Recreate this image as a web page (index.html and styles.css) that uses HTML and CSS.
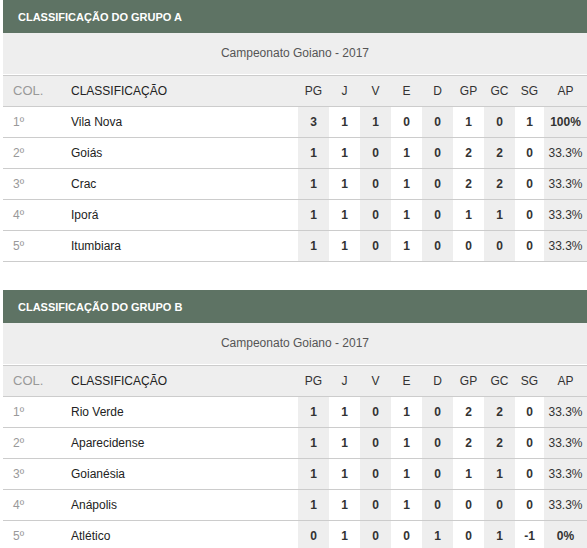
FILE: index.html
```html
<!DOCTYPE html>
<html>
<head>
  <meta charset="UTF-8">
  <title>Classificação - Campeonato Goiano 2017</title>
  <link rel="stylesheet" href="styles.css">
</head>
<body>
  <div class="group">
    <h2 class="group-title">CLASSIFICAÇÃO DO GRUPO A</h2>
    <div class="subtitle">Campeonato Goiano - 2017</div>
    <table class="standings">
      <colgroup>
        <col class="c-pos"><col class="c-name">
        <col class="c-num"><col class="c-num"><col class="c-num"><col class="c-num">
        <col class="c-num"><col class="c-num"><col class="c-num">
        <col class="c-sg"><col class="c-ap">
      </colgroup>
      <thead>
        <tr>
          <th class="pos">COL.</th><th class="name">CLASSIFICAÇÃO</th>
          <th>PG</th><th>J</th><th>V</th><th>E</th><th>D</th><th>GP</th><th>GC</th><th>SG</th><th>AP</th>
        </tr>
      </thead>
      <tbody>
        <tr><td class="pos">1º</td><td class="name">Vila Nova</td><td class="alt">3</td><td>1</td><td class="alt">1</td><td>0</td><td class="alt">0</td><td>1</td><td class="alt">0</td><td>1</td><td class="alt ap strong">100%</td></tr>
        <tr><td class="pos">2º</td><td class="name">Goiás</td><td class="alt">1</td><td>1</td><td class="alt">0</td><td>1</td><td class="alt">0</td><td>2</td><td class="alt">2</td><td>0</td><td class="alt ap">33.3%</td></tr>
        <tr><td class="pos">3º</td><td class="name">Crac</td><td class="alt">1</td><td>1</td><td class="alt">0</td><td>1</td><td class="alt">0</td><td>2</td><td class="alt">2</td><td>0</td><td class="alt ap">33.3%</td></tr>
        <tr><td class="pos">4º</td><td class="name">Iporá</td><td class="alt">1</td><td>1</td><td class="alt">0</td><td>1</td><td class="alt">0</td><td>1</td><td class="alt">1</td><td>0</td><td class="alt ap">33.3%</td></tr>
        <tr><td class="pos">5º</td><td class="name">Itumbiara</td><td class="alt">1</td><td>1</td><td class="alt">0</td><td>1</td><td class="alt">0</td><td>0</td><td class="alt">0</td><td>0</td><td class="alt ap">33.3%</td></tr>
      </tbody>
    </table>
  </div>

  <div class="group">
    <h2 class="group-title">CLASSIFICAÇÃO DO GRUPO B</h2>
    <div class="subtitle">Campeonato Goiano - 2017</div>
    <table class="standings">
      <colgroup>
        <col class="c-pos"><col class="c-name">
        <col class="c-num"><col class="c-num"><col class="c-num"><col class="c-num">
        <col class="c-num"><col class="c-num"><col class="c-num">
        <col class="c-sg"><col class="c-ap">
      </colgroup>
      <thead>
        <tr>
          <th class="pos">COL.</th><th class="name">CLASSIFICAÇÃO</th>
          <th>PG</th><th>J</th><th>V</th><th>E</th><th>D</th><th>GP</th><th>GC</th><th>SG</th><th>AP</th>
        </tr>
      </thead>
      <tbody>
        <tr><td class="pos">1º</td><td class="name">Rio Verde</td><td class="alt">1</td><td>1</td><td class="alt">0</td><td>1</td><td class="alt">0</td><td>2</td><td class="alt">2</td><td>0</td><td class="alt ap">33.3%</td></tr>
        <tr><td class="pos">2º</td><td class="name">Aparecidense</td><td class="alt">1</td><td>1</td><td class="alt">0</td><td>1</td><td class="alt">0</td><td>2</td><td class="alt">2</td><td>0</td><td class="alt ap">33.3%</td></tr>
        <tr><td class="pos">3º</td><td class="name">Goianésia</td><td class="alt">1</td><td>1</td><td class="alt">0</td><td>1</td><td class="alt">0</td><td>1</td><td class="alt">1</td><td>0</td><td class="alt ap">33.3%</td></tr>
        <tr><td class="pos">4º</td><td class="name">Anápolis</td><td class="alt">1</td><td>1</td><td class="alt">0</td><td>1</td><td class="alt">0</td><td>0</td><td class="alt">0</td><td>0</td><td class="alt ap">33.3%</td></tr>
        <tr><td class="pos">5º</td><td class="name">Atlético</td><td class="alt">0</td><td>1</td><td class="alt">0</td><td>0</td><td class="alt">1</td><td>0</td><td class="alt">1</td><td>-1</td><td class="alt ap strong">0%</td></tr>
      </tbody>
    </table>
  </div>
</body>
</html>
```

FILE: styles.css
```css
body {
  font-family: "Liberation Sans", Arial, sans-serif;
  margin: 0 0 0 3px;
  padding: 0;
  color: #333;
}
.group {
  width: 584px;
  margin-bottom: 28px;
}
.group-title {
  margin: 0;
  height: 33px;
  line-height: 34px;
  padding-left: 15px;
  background-color: #5e7364;
  color: #fff;
  font-size: 11px;
  font-weight: bold;
}
.subtitle {
  height: 41px;
  line-height: 40px;
  background-color: #eee;
  border-bottom: 1px solid #fff;
  text-align: center;
  font-size: 12px;
  color: #555;
}
.standings {
  width: 584px;
  table-layout: fixed;
  border-collapse: separate;
  border-spacing: 0;
  font-size: 12px;
}
.c-pos { width: 68px; }
.c-name { width: 227px; }
.c-num { width: 31px; }
.c-sg { width: 29px; }
.c-ap { width: 43px; }
.standings th {
  background-color: #eee;
  border-top: 1px solid #ccc;
  border-bottom: 1px solid #ccc;
  padding: 0;
  height: 30px;
  line-height: 30px;
  font-weight: normal;
  color: #333;
  text-align: center;
}
.standings td {
  padding: 0;
  height: 30px;
  line-height: 30px;
  border-bottom: 1px solid #ccc;
  text-align: center;
  font-weight: bold;
  color: #333;
}
.standings .pos {
  text-align: left;
  padding-left: 10px;
  color: #999;
  font-weight: normal;
}
.standings th.pos {
  font-size: 13px;
}
.standings .name {
  text-align: left;
  font-weight: normal;
  color: #222;
}
.standings td.alt {
  background-color: #eee;
}
.standings td.ap {
  font-weight: normal;
}
.standings td.strong {
  font-weight: bold;
}
```
